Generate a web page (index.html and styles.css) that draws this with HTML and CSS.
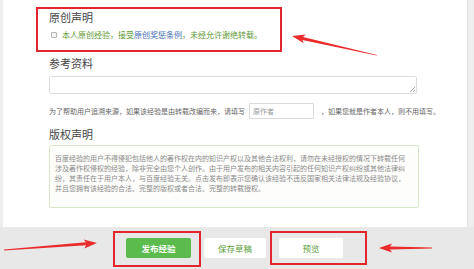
FILE: index.html
```html
<!DOCTYPE html>
<html lang="zh-CN">
<head>
<meta charset="utf-8">
<link rel="stylesheet" href="styles.css">
</head>
<body>
<div class="page">
  <div class="panel">
    <h2 class="sec-title">原创声明</h2>
    <div class="orig-line">
      <span class="checkbox"></span>
      <span class="green">本人原创经验，接受</span><span class="blue">原创奖惩条例</span><span class="green">，未经允许谢绝转载。</span>
    </div>

    <h2 class="sec-title ref-title">参考资料</h2>
    <div class="ref-wrap"><textarea class="ref-area"></textarea></div>
    <div class="help-line">
      <span>为了帮助用户追溯来源，如果该经验是由转载改编而来，请填写</span>
      <span class="author-input">原作者</span>
      <span>，如果您就是作者本人，则不用填写。</span>
    </div>

    <h2 class="sec-title copy-title">版权声明</h2>
    <div class="copy-box">百度经验的用户不得侵犯包括他人的著作权在内的知识产权以及其他合法权利，请勿在未经授权的情况下转载任何<br>涉及著作权侵权的经验，除非完全由您个人创作。由于用户发布的相关内容引起的任何知识产权纠纷或其他法律纠<br>纷，其责任在于用户本人，与百度经验无关。点击发布即表示您确认该经验不违反国家相关法律法规及经验协议，<br>并且您拥有该经验的合法、完整的版权或者合法、完整的转载授权。</div>
  </div>
  <div class="actions">
    <button class="btn btn-primary">发布经验</button>
    <button class="btn">保存草稿</button>
    <button class="btn">预览</button>
  </div>

  <div class="mark mark-1"></div>
  <div class="mark mark-2"></div>
  <div class="mark mark-3"></div>
  <svg class="arrows" width="474" height="269" viewBox="0 0 474 269">
    <polygon points="292,36 305.7,34.4 303,36.9 377,55 376.6,55.6 302.4,39.9 303.7,43.2" />
    <polygon points="97,243 83.7,239.5 85.9,242.3 4,249.5 4,250.5 86.1,245.3 84.3,248.5" />
    <polygon points="379,248 392,243.5 390,246.5 432,247.6 432,248.4 390,249.5 392,252.5" />
  </svg>
</div>
</body>
</html>
```

FILE: styles.css
```css
* { box-sizing: border-box; }
html, body {
  margin: 0;
  padding: 0;
  width: 474px;
  height: 269px;
  overflow: hidden;
  background: #eeeeee;
  font-family: "Noto Sans CJK SC", "Noto Sans", sans-serif;
}
.page {
  position: relative;
  width: 474px;
  height: 269px;
  display: flex;
  flex-direction: column;
}
.panel {
  margin-left: 3px;
  width: 465px;
  height: 227px;
  background: #ffffff;
  border-right: 1px solid #e2e2e2;
  padding: 10px 0 0 46px;
  display: flex;
  flex-direction: column;
  align-items: flex-start;
}
.sec-title {
  margin: 0;
  font-size: 11px;
  line-height: 14px;
  font-weight: normal;
  color: #444;
}
.orig-line {
  margin-top: 6px;
  height: 10px;
  display: flex;
  align-items: center;
  font-size: 8px;
  line-height: 10px;
  white-space: nowrap;
}
.checkbox {
  width: 6px;
  height: 6px;
  margin: 0 5px 0 2px;
  border: 1px solid #b5b5b5;
  border-radius: 1px;
  background: #f4f4f4;
}
.green { color: #5e9a36; }
.blue { color: #3f6fb3; }
.ref-title { margin-top: 16px; }
.ref-wrap {
  position: relative;
  margin-top: 6px;
  width: 368px;
  height: 18px;
}
.ref-wrap::after {
  content: "";
  position: absolute;
  right: 2px;
  bottom: 2px;
  width: 5px;
  height: 5px;
  background: linear-gradient(135deg, transparent 45%, #a8a8a8 45%, #a8a8a8 55%, transparent 55%, transparent 72%, #a8a8a8 72%, #a8a8a8 82%, transparent 82%);
}
.ref-area {
  display: block;
  width: 368px;
  height: 18px;
  border: 1px solid #dcdcdc;
  border-radius: 2px;
  padding: 0;
  resize: none;
  background: #fff;
  font-family: inherit;
}
.help-line {
  margin-top: 9px;
  height: 16px;
  display: flex;
  align-items: center;
  font-size: 7px;
  color: #666;
  white-space: nowrap;
}
.author-input {
  margin: 0 7px 0 4px;
  width: 65px;
  height: 16px;
  border: 1px solid #dadada;
  border-radius: 1px;
  padding-left: 3px;
  display: flex;
  align-items: center;
  color: #999;
}
.copy-title { margin-top: 8px; }
.copy-box {
  margin-top: 4px;
  width: 370px;
  height: 63px;
  border: 1px solid #d8e6c9;
  border-radius: 2px;
  background: #fdfdfb;
  padding: 7px 0 0 5px;
  font-size: 7px;
  line-height: 10px;
  color: #8a8a8a;
  white-space: nowrap;
}
.actions {
  flex: 1;
  background: #e8e8e8;
  display: flex;
  align-items: flex-start;
  gap: 13px;
  padding: 11px 0 0 126px;
}
.btn {
  height: 20px;
  width: 62px;
  border: none;
  border-radius: 2px;
  background: #ffffff;
  color: #5b9e3a;
  font-family: inherit;
  font-size: 8.5px;
  padding: 0;
}
.btn-primary {
  width: 65px;
  background: #5bbb4c;
  color: #ffffff;
  font-weight: bold;
}
.actions .btn:last-child { width: 64px; }
.mark {
  position: absolute;
  border: 2px solid #e2262b;
}
.mark-1 { left: 36px; top: 7px; width: 246px; height: 45px; }
.mark-2 { left: 113px; top: 231px; width: 88px; height: 36px; }
.mark-3 { left: 270px; top: 231px; width: 97px; height: 34px; }
.arrows {
  position: absolute;
  left: 0;
  top: 0;
  fill: #ea2b2b;
}
```
